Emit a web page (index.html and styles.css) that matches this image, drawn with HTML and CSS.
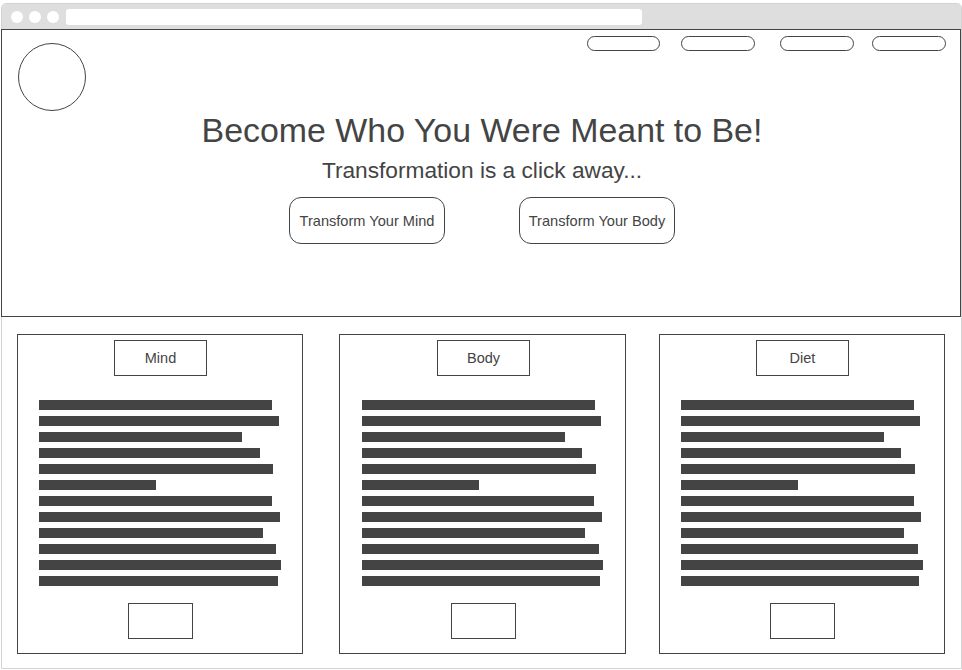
FILE: index.html
```html
<!DOCTYPE html>
<html lang="en">
<head>
<meta charset="utf-8">
<title>Transformation</title>
<link rel="stylesheet" href="styles.css">
</head>
<body>
<div class="browser">
  <div class="chrome">
    <span class="dot"></span><span class="dot"></span><span class="dot"></span>
    <span class="url"></span>
  </div>
  <header class="hero">
    <div class="topbar">
      <div class="logo"></div>
      <nav class="nav">
        <span class="pill"></span>
        <span class="pill"></span>
        <span class="pill"></span>
        <span class="pill"></span>
      </nav>
    </div>
    <h1 class="title">Become Who You Were Meant to Be!</h1>
    <p class="subtitle">Transformation is a click away...</p>
    <div class="ctas">
      <a class="cta">Transform Your Mind</a>
      <a class="cta">Transform Your Body</a>
    </div>
  </header>
  <main class="cards">
    <section class="card">
      <div class="card-title">Mind</div>
      <div class="lines">
        <span class="line" style="width:233px"></span>
        <span class="line" style="width:240px"></span>
        <span class="line" style="width:203px"></span>
        <span class="line" style="width:221px"></span>
        <span class="line" style="width:234px"></span>
        <span class="line" style="width:117px"></span>
        <span class="line" style="width:233px"></span>
        <span class="line" style="width:241px"></span>
        <span class="line" style="width:224px"></span>
        <span class="line" style="width:237px"></span>
        <span class="line" style="width:242px"></span>
        <span class="line" style="width:239px"></span>
      </div>
      <div class="card-btn"></div>
    </section>
    <section class="card">
      <div class="card-title">Body</div>
      <div class="lines">
        <span class="line" style="width:233px"></span>
        <span class="line" style="width:239px"></span>
        <span class="line" style="width:203px"></span>
        <span class="line" style="width:220px"></span>
        <span class="line" style="width:234px"></span>
        <span class="line" style="width:117px"></span>
        <span class="line" style="width:232px"></span>
        <span class="line" style="width:240px"></span>
        <span class="line" style="width:223px"></span>
        <span class="line" style="width:237px"></span>
        <span class="line" style="width:241px"></span>
        <span class="line" style="width:238px"></span>
      </div>
      <div class="card-btn"></div>
    </section>
    <section class="card">
      <div class="card-title">Diet</div>
      <div class="lines">
        <span class="line" style="width:233px"></span>
        <span class="line" style="width:239px"></span>
        <span class="line" style="width:203px"></span>
        <span class="line" style="width:220px"></span>
        <span class="line" style="width:234px"></span>
        <span class="line" style="width:117px"></span>
        <span class="line" style="width:233px"></span>
        <span class="line" style="width:240px"></span>
        <span class="line" style="width:223px"></span>
        <span class="line" style="width:237px"></span>
        <span class="line" style="width:242px"></span>
        <span class="line" style="width:238px"></span>
      </div>
      <div class="card-btn"></div>
    </section>
  </main>
</div>
</body>
</html>
```
FILE: styles.css
```css
* { box-sizing: border-box; }

html, body {
  margin: 0;
  padding: 0;
  background: #ffffff;
}

body {
  padding: 3px 0 0 1px;
  font-family: "Liberation Sans", Arial, sans-serif;
  color: #444444;
}

.browser {
  width: 961px;
  height: 666px;
  border: 1px solid #d3d3d3;
  border-radius: 5px 5px 0 0;
  background: #ffffff;
}

.chrome {
  height: 25px;
  background: #dedede;
  display: flex;
  align-items: center;
  padding-left: 9px;
  border-radius: 4px 4px 0 0;
}

.dot {
  width: 12px;
  height: 12px;
  border-radius: 50%;
  background: #ffffff;
  margin-right: 6px;
}

.dot:nth-child(3) { margin-right: 7px; }

.url {
  width: 576px;
  height: 16px;
  background: #ffffff;
  border-radius: 3px;
}

.hero {
  margin-left: -1px;
  width: 960px;
  height: 288px;
  border: 1px solid #444444;
  display: flex;
  flex-direction: column;
  align-items: center;
}

.topbar {
  align-self: stretch;
  display: flex;
  justify-content: space-between;
  align-items: flex-start;
  padding: 6px 14px 0 16px;
}

.logo {
  width: 68px;
  height: 68px;
  margin-top: 7px;
  border: 1px solid #444444;
  border-radius: 50%;
}

.nav {
  display: flex;
}

.pill {
  width: 74px;
  height: 15px;
  border: 1px solid #444444;
  border-radius: 8px;
}

.pill:nth-child(1) { width: 73px; }
.pill:nth-child(2) { margin-left: 21px; }
.pill:nth-child(3) { margin-left: 25px; }
.pill:nth-child(4) { margin-left: 18px; }

.title {
  margin: 0 0 0 2px;
  font-size: 33.9px;
  line-height: 38px;
  font-weight: normal;
  color: #444444;
}

.subtitle {
  margin: 8px 0 0 2px;
  font-size: 22.7px;
  line-height: 26px;
  color: #444444;
}

.ctas {
  margin: 14px 0 0 2px;
  display: flex;
  gap: 74px;
}

.cta {
  width: 156px;
  height: 47px;
  border: 1px solid #444444;
  border-radius: 12px;
  display: flex;
  align-items: center;
  justify-content: center;
  font-size: 14.6px;
  color: #444444;
  padding-top: 1px;
}

.cards {
  display: flex;
  padding: 17px 0 0 15px;
}

.card {
  width: 286px;
  height: 320px;
  border: 1px solid #444444;
  padding: 5px 0 14px 21px;
  display: flex;
  flex-direction: column;
}

.card:nth-child(2) {
  width: 287px;
  margin-left: 36px;
  padding-left: 22px;
}

.card:nth-child(3) {
  margin-left: 33px;
}

.card-title {
  align-self: center;
  margin-left: -20px;
  width: 93px;
  height: 36px;
  border: 1px solid #444444;
  display: flex;
  align-items: center;
  justify-content: center;
  font-size: 14.5px;
  color: #444444;
}

.lines {
  margin-top: 24px;
  display: flex;
  flex-direction: column;
  gap: 6px;
}

.line {
  display: block;
  height: 10px;
  background: #444444;
}

.card-btn {
  align-self: center;
  margin: 17px 0 0 -20px;
  width: 65px;
  height: 36px;
  border: 1px solid #444444;
}
```
